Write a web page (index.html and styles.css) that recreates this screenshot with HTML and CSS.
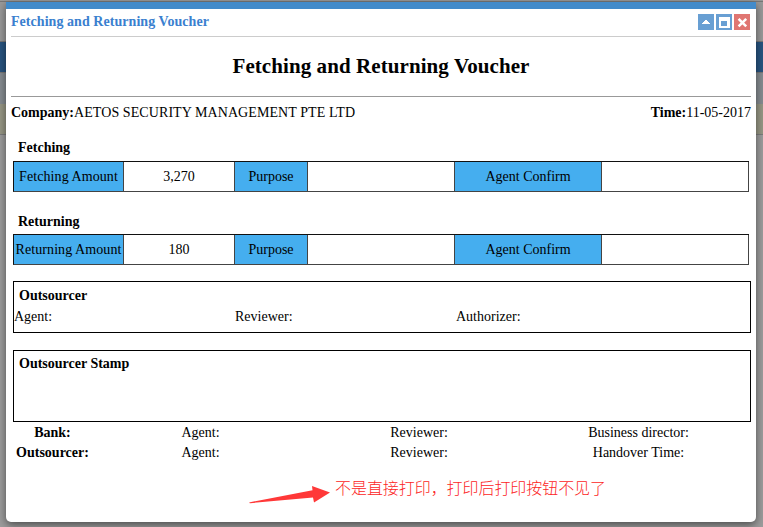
FILE: index.html
```html
<!DOCTYPE html>
<html lang="en">
<head>
<meta charset="utf-8">
<title>Fetching and Returning Voucher</title>
<link rel="stylesheet" href="styles.css">
</head>
<body>
<main class="dialog">
  <header class="bar">
    <span class="caption">Fetching and Returning Voucher</span>
    <div class="tools">
      <svg class="tool" viewBox="0 0 16 16"><path d="M4 9h8v1H4zM5 8h6v1H5zM6 7h4v1H6zM7 6h2v1H7z"/></svg>
      <svg class="tool" viewBox="0 0 16 16"><path fill-rule="evenodd" d="M3 3h11v11H3zM5 7v5h6V7z"/></svg>
      <svg class="tool close" viewBox="0 0 16 16"><path class="cross" d="M4.6 4.8l7.6 7.6M12.2 4.8l-7.6 7.6"/></svg>
    </div>
  </header>
  <h1><span>Fetching and Returning Voucher</span></h1>
  <div class="info"><span><b>Company:</b><span class="firm">AETOS SECURITY MANAGEMENT PTE LTD</span></span><span><b>Time:</b>11-05-2017</span></div>
  <h2>Fetching</h2>
  <div class="grid">
    <div class="key wide">Fetching Amount</div><div>3,270</div><div class="key">Purpose</div><div></div><div class="key">Agent Confirm</div><div></div>
  </div>
  <h2 class="second">Returning</h2>
  <div class="grid">
    <div class="key wide">Returning Amount</div><div>180</div><div class="key">Purpose</div><div></div><div class="key">Agent Confirm</div><div></div>
  </div>
  <section class="box people">
    <h3>Outsourcer</h3>
    <div class="thirds"><span>Agent:</span><span>Reviewer:</span><span>Authorizer:</span></div>
  </section>
  <section class="box stamp"><h3>Outsourcer Stamp</h3></section>
  <div class="sign">
    <b>Bank:</b><span>Agent:</span><span>Reviewer:</span><span>Business director:</span>
    <b>Outsourcer:</b><span>Agent:</span><span>Reviewer:</span><span>Handover Time:</span>
  </div>
  <div class="note">
    <svg class="arrow" viewBox="0 0 82 18"><path d="M1 16.2L63.5 4.2 63 0 81 6.5 65 16.5 64 11.6 1 17.2Q-.5 16.8 1 16.2z"/></svg>
    <span>不是直接打印，打印后打印按钮不见了</span>
  </div>
</main>
</body>
</html>
```
FILE: styles.css
```css
* { box-sizing: border-box; }
body {
  margin: 0;
  height: 527px;
  padding: 2px 7px 0 6px;
  overflow: hidden;
  font: 14px/20px "Liberation Serif", "Noto Sans CJK SC", serif;
  color: #000;
  background: linear-gradient(#999 0 1px, #777 1px 2px, #999 2px 41px, #777 41px 42px, #285480 42px 72px, #777 72px 73px, #868c91 73px 104px, #979785 104px 134px, #7c7c7c 134px 135px, #9c9c9c 135px);
}
.dialog {
  width: 750px;
  height: 520px;
  padding: 0 5px;
  border-top: 7px solid #428bca;
  border-radius: 0 0 5px 5px;
  background: #fff;
  box-shadow: 0 3px 9px rgba(0, 0, 0, .5);
}
.bar {
  display: flex;
  justify-content: space-between;
  height: 28px;
  border-bottom: 1px solid #ccc;
}
.caption { padding-top: 3px; font-weight: bold; color: #3a80cf; letter-spacing: .05px; }
.tools { display: flex; gap: 2px; padding: 5px 1px 0 0; }
.tool { width: 16px; height: 16px; background: #689fd3; fill: #fff; shape-rendering: crispEdges; }
.close { background: #e07672; shape-rendering: auto; }
.cross { fill: none; stroke: #fff; stroke-width: 2.5; }
h1 {
  margin: 0;
  height: 60px;
  padding-top: 14px;
  border-bottom: 1px solid #999;
  text-align: center;
  font-size: 21px;
  line-height: 30px;
  letter-spacing: .08px;
}
.info { display: flex; justify-content: space-between; padding-top: 6px; height: 41px; }
.firm { letter-spacing: .08px; }
h2 { margin: 0 0 3px 7px; font-size: 14px; line-height: 20px; }
.second { margin-top: 20px; margin-bottom: 2px; }
.grid {
  display: grid;
  grid-template-columns: 111px 111px 73px 147px 147px 147px;
  width: 736px;
  height: 31px;
  margin-left: 2px;
  border-top: 1px solid #111;
}
.grid > div {
  border-right: 1px solid #444;
  border-bottom: 1px solid #444;
  text-align: center;
  line-height: 29px;
  white-space: nowrap;
}
.grid > .key { background: #45aeef; }
.grid > .wide { border-left: 1px solid #111; letter-spacing: .08px; }
.box { width: 738px; margin-left: 2px; border: 1px solid #000; }
.box h3 { margin: 0 0 0 5px; font-size: 14px; line-height: 20px; }
.people { height: 52px; margin-top: 16px; padding-top: 4px; }
.thirds { display: grid; grid-template-columns: 221px 221px 1fr; padding-top: 1px; }
.stamp { height: 72px; margin-top: 17px; padding-top: 3px; }
.sign {
  display: grid;
  grid-template-columns: 79px 217px 220px 219px;
  margin-left: 2px;
  padding-top: 1px;
  text-align: center;
}
.note { display: flex; align-items: flex-start; height: 40px; margin-top: 15px; padding-left: 238px; color: #fc2424; font-size: 16px; font-weight: 300; white-space: nowrap; }
.note span { margin-left: 4px; line-height: 22px; letter-spacing: -.06px; }
.arrow { width: 82px; height: 18px; margin-top: 8px; fill: #ff3838; }
```
